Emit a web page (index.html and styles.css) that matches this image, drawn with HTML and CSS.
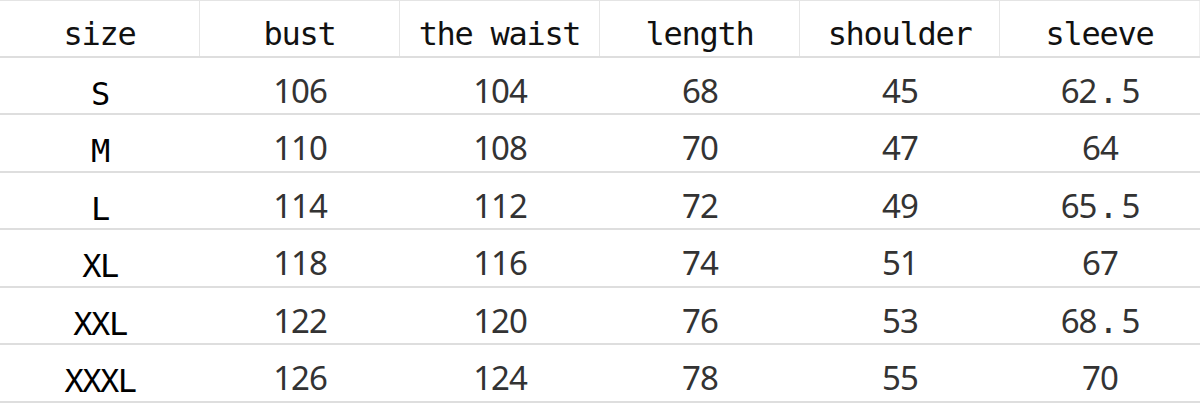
FILE: index.html
```html
<!DOCTYPE html>
<html>
<head>
<meta charset="utf-8">
<link rel="stylesheet" href="styles.css">
</head>
<body>
<div class="chart">
  <div class="row head">
    <div class="cell">size</div>
    <div class="cell">bust</div>
    <div class="cell">the waist</div>
    <div class="cell">length</div>
    <div class="cell">shoulder</div>
    <div class="cell">sleeve</div>
  </div>
  <div class="row">
    <div class="cell sz">S</div>
    <div class="cell num">106</div>
    <div class="cell num">104</div>
    <div class="cell num">68</div>
    <div class="cell num">45</div>
    <div class="cell num">62<span class="dot">.</span>5</div>
  </div>
  <div class="row">
    <div class="cell sz">M</div>
    <div class="cell num">110</div>
    <div class="cell num">108</div>
    <div class="cell num">70</div>
    <div class="cell num">47</div>
    <div class="cell num">64</div>
  </div>
  <div class="row">
    <div class="cell sz">L</div>
    <div class="cell num">114</div>
    <div class="cell num">112</div>
    <div class="cell num">72</div>
    <div class="cell num">49</div>
    <div class="cell num">65<span class="dot">.</span>5</div>
  </div>
  <div class="row">
    <div class="cell sz">XL</div>
    <div class="cell num">118</div>
    <div class="cell num">116</div>
    <div class="cell num">74</div>
    <div class="cell num">51</div>
    <div class="cell num">67</div>
  </div>
  <div class="row">
    <div class="cell sz">XXL</div>
    <div class="cell num">122</div>
    <div class="cell num">120</div>
    <div class="cell num">76</div>
    <div class="cell num">53</div>
    <div class="cell num">68<span class="dot">.</span>5</div>
  </div>
  <div class="row">
    <div class="cell sz">XXXL</div>
    <div class="cell num">126</div>
    <div class="cell num">124</div>
    <div class="cell num">78</div>
    <div class="cell num">55</div>
    <div class="cell num">70</div>
  </div>
</div>
</body>
</html>
```
FILE: styles.css
```css
html, body {
  margin: 0;
  padding: 0;
  background: #ffffff;
}
.chart {
  width: 1200px;
  display: flex;
  flex-direction: column;
}
.row {
  display: grid;
  grid-template-columns: repeat(6, 200px);
  height: 57.5px;
  box-sizing: border-box;
  border-bottom: 2px solid #dedede;
}
.head {
  border-top: 1px solid #e4e4e4;
}
.cell {
  box-sizing: border-box;
  text-align: center;
  white-space: nowrap;
  height: 100%;
}
.head .cell {
  font-family: "DejaVu Sans Mono", "Liberation Mono", monospace;
  font-size: 32px;
  letter-spacing: -1.3px;
  line-height: 32px;
  padding-top: 17px;
  color: #111111;
  border-right: 1px solid #e6e6e6;
}
.head .cell:last-child {
  border-right: 1px solid #efefef;
}
.sz {
  font-family: "DejaVu Sans Mono", "Liberation Mono", monospace;
  font-size: 32px;
  font-weight: 500;
  letter-spacing: -1.5px;
  line-height: 32px;
  padding-top: 20px;
  color: #000000;
}
.num {
  font-family: "Noto Sans", "Liberation Sans", sans-serif;
  font-size: 33px;
  letter-spacing: -1px;
  line-height: 32px;
  padding-top: 17px;
  color: #333333;
}
.dot {
  font-family: "DejaVu Sans Mono", "Liberation Mono", monospace;
  letter-spacing: 0;
  margin: 0 3px 0 2px;
}
```
